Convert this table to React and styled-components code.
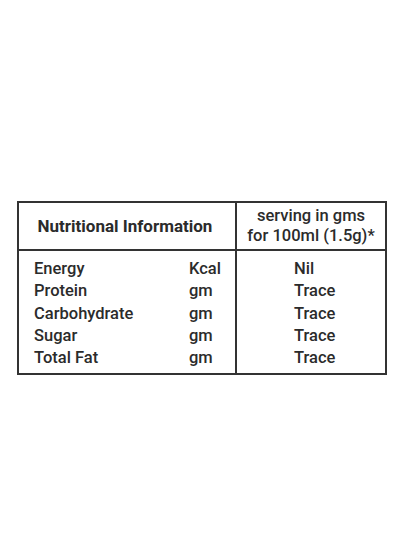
import styled, { createGlobalStyle } from "styled-components";

const Global = createGlobalStyle`
  html, body {
    margin: 0;
    padding: 0;
    background: #ffffff;
  }
  body {
    font-family: Roboto, "Liberation Sans", sans-serif;
    color: #2b2b2b;
  }
`;

const Page = styled.div`
  width: 416px;
  height: 555px;
  padding: 201px 0 0 17px;
  box-sizing: border-box;
`;

const Table = styled.div`
  width: 370px;
  border: 2px solid #333333;
  box-sizing: border-box;
`;

const Row = styled.div`
  display: flex;
  border-bottom: ${p => (p.$head ? "2px solid #333333" : "none")};
  height: ${p => (p.$head ? "46px" : "122px")};
`;

const Cell = styled.div`
  width: ${p => (p.$left ? "216px" : "auto")};
  flex: ${p => (p.$left ? "none" : "1")};
  border-right: ${p => (p.$left ? "2px solid #333333" : "none")};
  box-sizing: content-box;
`;

const HeadCell = styled(Cell)`
  display: flex;
  align-items: center;
  justify-content: center;
  text-align: center;
  font-size: ${p => (p.$bold ? "17px" : "16.5px")};
  line-height: 20px;
  font-weight: ${p => (p.$bold ? 700 : 500)};
  padding-right: ${p => (p.$bold ? "4px" : "0")};
  width: ${p => (p.$bold ? "212px" : "auto")};
`;

const Lines = styled.div`
  display: grid;
  grid-template-columns: ${p => p.$cols || "1fr"};
  padding: 7px 0 0 ${p => p.$indent};
  font-size: 16.5px;
  font-weight: 500;
  line-height: 22.3px;
`;

const rows = [
  ["Energy", "Kcal", "Nil"],
  ["Protein", "gm", "Trace"],
  ["Carbohydrate", "gm", "Trace"],
  ["Sugar", "gm", "Trace"],
  ["Total Fat", "gm", "Trace"],
];

export default function App() {
  return (
    <Page>
      <Global />
      <Table>
        <Row $head>
          <HeadCell $left $bold>Nutritional Information</HeadCell>
          <HeadCell>
            serving in gms
            <br />
            for 100ml (1.5g)*
          </HeadCell>
        </Row>
        <Row>
          <Cell $left>
            <Lines $cols="155px 1fr" $indent="15px">
              {rows.map(([name, unit]) => [
                <span key={name}>{name}</span>,
                <span key={name + "-u"}>{unit}</span>,
              ])}
            </Lines>
          </Cell>
          <Cell>
            <Lines $indent="57px">
              {rows.map(([name, , value]) => (
                <span key={name}>{value}</span>
              ))}
            </Lines>
          </Cell>
        </Row>
      </Table>
    </Page>
  );
}
